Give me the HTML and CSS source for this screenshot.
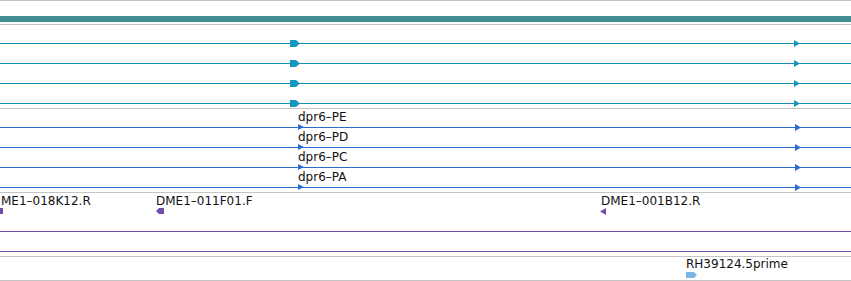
FILE: index.html
```html
<!DOCTYPE html>
<html>
<head>
<meta charset="utf-8">
<link rel="stylesheet" href="styles.css">
</head>
<body>
<div class="browser">
  <div class="track track-ref">
    <div class="refbar"></div>
  </div>

  <div class="track track-tx">
    <div class="row"><div class="line teal"></div>
      <svg class="mk mk-big" style="left:290px" width="10" height="7" viewBox="0 0 10 7"><polygon points="0,0 6,0 10,3.5 6,7 0,7" class="f-teal"/></svg>
      <svg class="mk mk-small" style="left:794px" width="6" height="7" viewBox="0 0 6 7"><polygon points="0,0 6,3.5 0,7" class="f-teal"/></svg>
    </div>
    <div class="row"><div class="line teal"></div>
      <svg class="mk mk-big" style="left:290px" width="10" height="7" viewBox="0 0 10 7"><polygon points="0,0 6,0 10,3.5 6,7 0,7" class="f-teal"/></svg>
      <svg class="mk mk-small" style="left:794px" width="6" height="7" viewBox="0 0 6 7"><polygon points="0,0 6,3.5 0,7" class="f-teal"/></svg>
    </div>
    <div class="row"><div class="line teal"></div>
      <svg class="mk mk-big" style="left:290px" width="10" height="7" viewBox="0 0 10 7"><polygon points="0,0 6,0 10,3.5 6,7 0,7" class="f-teal"/></svg>
      <svg class="mk mk-small" style="left:794px" width="6" height="7" viewBox="0 0 6 7"><polygon points="0,0 6,3.5 0,7" class="f-teal"/></svg>
    </div>
    <div class="row"><div class="line teal"></div>
      <svg class="mk mk-big" style="left:290px" width="10" height="7" viewBox="0 0 10 7"><polygon points="0,0 6,0 10,3.5 6,7 0,7" class="f-teal"/></svg>
      <svg class="mk mk-small" style="left:794px" width="6" height="7" viewBox="0 0 6 7"><polygon points="0,0 6,3.5 0,7" class="f-teal"/></svg>
    </div>
  </div>

  <div class="track track-tx">
    <div class="row"><span class="label" style="left:298px">dpr6–PE</span><div class="line blue"></div>
      <svg class="mk mk-tri" style="left:298px" width="6" height="6" viewBox="0 0 6 6"><polygon points="0,0 6,3 0,6" class="f-blue"/></svg>
      <svg class="mk mk-tri" style="left:795px" width="6" height="7" viewBox="0 0 6 7"><polygon points="0,0 6,3.5 0,7" class="f-blue"/></svg>
    </div>
    <div class="row"><span class="label" style="left:298px">dpr6–PD</span><div class="line blue"></div>
      <svg class="mk mk-tri" style="left:298px" width="6" height="6" viewBox="0 0 6 6"><polygon points="0,0 6,3 0,6" class="f-blue"/></svg>
      <svg class="mk mk-tri" style="left:795px" width="6" height="7" viewBox="0 0 6 7"><polygon points="0,0 6,3.5 0,7" class="f-blue"/></svg>
    </div>
    <div class="row"><span class="label" style="left:298px">dpr6–PC</span><div class="line blue"></div>
      <svg class="mk mk-tri" style="left:298px" width="6" height="6" viewBox="0 0 6 6"><polygon points="0,0 6,3 0,6" class="f-blue"/></svg>
      <svg class="mk mk-tri" style="left:795px" width="6" height="7" viewBox="0 0 6 7"><polygon points="0,0 6,3.5 0,7" class="f-blue"/></svg>
    </div>
    <div class="row"><span class="label" style="left:298px">dpr6–PA</span><div class="line blue"></div>
      <svg class="mk mk-tri" style="left:298px" width="6" height="6" viewBox="0 0 6 6"><polygon points="0,0 6,3 0,6" class="f-blue"/></svg>
      <svg class="mk mk-tri" style="left:795px" width="6" height="7" viewBox="0 0 6 7"><polygon points="0,0 6,3.5 0,7" class="f-blue"/></svg>
    </div>
  </div>

  <div class="track track-est">
    <div class="row">
      <span class="label" style="left:1px">ME1–018K12.R</span>
      <span class="label" style="left:156px">DME1–011F01.F</span>
      <span class="label" style="left:601px">DME1–001B12.R</span>
      <svg class="mk mk-est" style="left:0px" width="3" height="6" viewBox="0 0 3 6"><rect x="0" y="0" width="3" height="6" class="f-purple"/></svg>
      <svg class="mk mk-est" style="left:156px" width="8" height="6" viewBox="0 0 8 6"><polygon points="0,3 3,0 8,0 8,6 3,6" class="f-purple"/></svg>
      <svg class="mk mk-est" style="left:600px" width="6" height="7" viewBox="0 0 6 7"><polygon points="6,0 0,3.5 6,7" class="f-purple"/></svg>
    </div>
    <div class="row"><div class="line purple"></div></div>
    <div class="row"><div class="line purple"></div></div>
  </div>

  <div class="track track-cdna">
    <div class="row">
      <span class="label" style="left:686px">RH39124.5prime</span>
      <svg class="mk mk-cdna" style="left:686px" width="11" height="6" viewBox="0 0 11 6"><polygon points="0,0 8,0 11,3 8,6 0,6" class="f-light"/></svg>
    </div>
  </div>
</div>
</body>
</html>
```

FILE: styles.css
```css
html, body {
  margin: 0;
  padding: 0;
  background: #ffffff;
}

.browser {
  width: 851px;
  height: 281px;
  overflow: hidden;
  font-family: "DejaVu Sans", sans-serif;
  font-size: 12px;
  color: #111;
}

.track {
  display: flex;
  flex-direction: column;
  border-bottom: 1px solid #c4c4c4;
}

.track-ref {
  border-top: 1px solid #c4c4c4;
  padding-top: 15px;
  padding-bottom: 2px;
}

.refbar {
  height: 6px;
  background: #3f8e91;
}

.track-tx {
  padding-bottom: 3px;
}

.track-est {
  padding-bottom: 3px;
}

.track-cdna {
  height: 24px;
  box-sizing: border-box;
}

.row {
  position: relative;
  height: 20px;
  box-sizing: border-box;
  display: flex;
  align-items: flex-end;
  padding-bottom: 1px;
}

.track-cdna .row {
  height: 23px;
}

.line {
  flex: 1;
  height: 1px;
}

.line.teal { background: #1592b2; }
.line.blue { background: #2a6bd0; }
.line.purple { background: #6e4ea6; }

.label {
  position: absolute;
  top: 1px;
  line-height: 14px;
  white-space: nowrap;
}

.track-cdna .label {
  top: 0;
}

.mk {
  position: absolute;
  display: block;
}

.mk-big { top: 15px; }
.mk-small { top: 15px; }
.mk-tri { top: 15px; }
.mk-est { top: 15px; }
.mk-cdna { top: 15px; }

.f-teal { fill: #1596bf; }
.f-blue { fill: #2b6cd2; }
.f-purple { fill: #6e4ea6; }
.f-light { fill: #7ab4e2; }
```
